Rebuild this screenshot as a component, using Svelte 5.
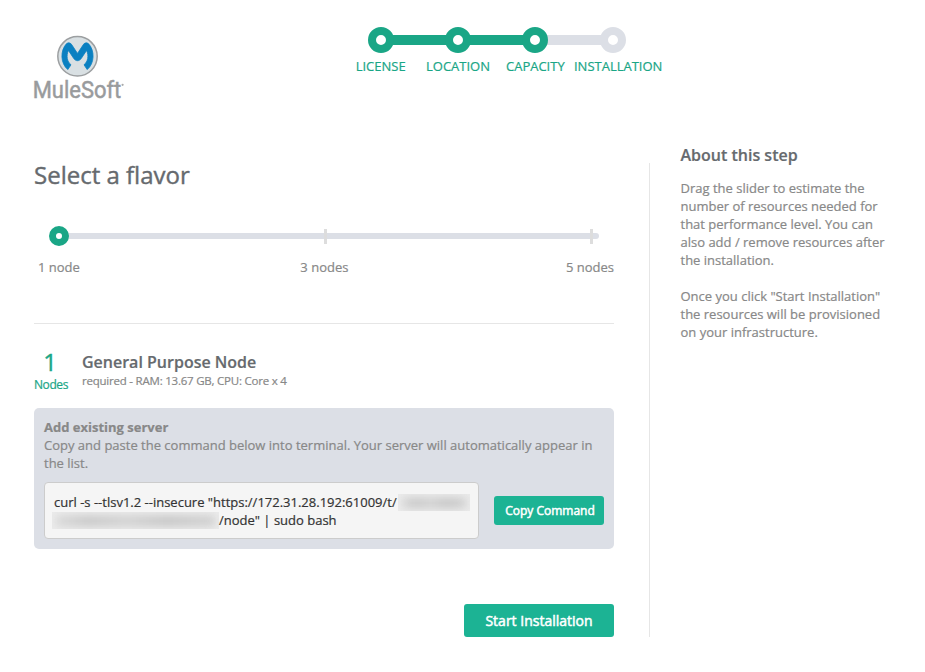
<script>
  const steps = [
    { label: 'LICENSE', done: true },
    { label: 'LOCATION', done: true },
    { label: 'CAPACITY', done: true },
    { label: 'INSTALLATION', done: false }
  ];
  const flavors = ['1 node', '3 nodes', '5 nodes'];
</script>

<div class="page">
  <header>
    <svg class="logo" width="92" height="68" viewBox="0 0 92 68" role="img" aria-label="MuleSoft">
      <circle cx="44.5" cy="21.3" r="19.7" fill="#d9e0e3" stroke="#9c9fa1" stroke-width="1.5" />
      <path d="M33.6 8.6C35.4 7.2 37.6 7.8 38.8 9.8L44.5 18.4L50.2 9.8C51.4 7.8 53.6 7.2 55.4 8.6C62 15.4 61.6 28.6 54.2 34.6L51 29.8C55 26.6 56 20.8 53.6 15.4L48.2 23.6C46.2 26.4 42.8 26.4 40.8 23.6L35.4 15.4C33 20.8 34 26.6 38 29.8L34.8 34.6C27.4 28.6 27 15.4 33.6 8.6Z" fill="#0a80c1" stroke="#0a80c1" stroke-width="0.8" />
      <text x="-0.3" y="62.6" textLength="88.6" lengthAdjust="spacingAndGlyphs">MuleSoft</text>
      <circle cx="89.6" cy="49.8" r="1.1" fill="#aaa" />
    </svg>
    <ol class="steps">
      {#each steps as step}
        <li class:done={step.done}>
          <div class="rail"><i></i><b></b><i></i></div>
          <span>{step.label}</span>
        </li>
      {/each}
    </ol>
  </header>

  <div class="body">
    <main>
      <h1>Select a flavor</h1>
      <div class="slider">
        <div class="track">
          <b class="thumb"></b>
          <i class="tick"></i>
          <i class="tick"></i>
        </div>
        <div class="labels">
          {#each flavors as f}<span>{f}</span>{/each}
        </div>
      </div>

      <section class="profile">
        <div class="count"><strong>1</strong><span>Nodes</span></div>
        <div class="info">
          <h2>General Purpose Node</h2>
          <p>required - RAM: 13.67 GB, CPU: Core x 4</p>
        </div>
      </section>

      <section class="panel">
        <strong>Add existing server</strong>
        <p>Copy and paste the command below into terminal. Your server will automatically appear in the list.</p>
        <div class="row">
          <div class="command">
            <div class="line">curl -s --tlsv1.2 --insecure "https://172.31.28.192:61009/t/<span class="mask first"><i></i></span></div>
            <div class="line"><span class="mask second"><i></i></span>/node" | sudo bash</div>
          </div>
          <button class="copy">Copy Command</button>
        </div>
      </section>

      <button class="start">Start Installation</button>
    </main>

    <aside>
      <h3>About this step</h3>
      <p>Drag the slider to estimate the number of resources needed for that performance level. You can also add / remove resources after the installation.</p>
      <p>Once you click "Start Installation" the resources will be provisioned on your infrastructure.</p>
    </aside>
  </div>
</div>

<style>
  :global(body) { background: #fff; }
  .page {
    box-sizing: border-box;
    width: 925px;
    height: 672px;
    overflow: hidden;
    padding-left: 34px;
    font: 13px/18px "Open Sans", sans-serif;
    color: #888;
    -webkit-text-stroke: 0.2px;
  }
  h1, h2, h3, p, ol { margin: 0; padding: 0; }
  header { display: flex; height: 143px; box-sizing: border-box; padding-top: 27px; }
  .logo { margin: 8px 0 0 -1px; display: block; flex: none; overflow: visible; }
  .logo text { font: 400 24px Roboto, sans-serif; fill: #999b9d; stroke: #999b9d; stroke-width: 0.5px; }
  .steps { display: flex; list-style: none; margin-left: 217px; }
  .steps li { width: 77.33px; color: #1aa686; text-align: center; }
  .rail { display: flex; align-items: center; height: 26px; }
  .rail i { flex: 1; height: 10px; background: #dcdfe6; margin: 0 -1px; }
  .rail b { position: relative; box-sizing: border-box; width: 26px; height: 26px; border: 8px solid #dcdfe6; border-radius: 50%; }
  .done .rail i { background: #1aa686; }
  .done:nth-child(3) .rail i:last-child { background: #dcdfe6; }
  .done .rail b { border-color: #1aa686; }
  li:first-child .rail i:first-child, li:last-child .rail i:last-child { background: transparent; }
  .steps span { display: block; margin-top: 4px; white-space: nowrap; }

  .body { display: flex; }
  main { width: 580px; padding-top: 14px; }
  h1 { font-size: 24px; line-height: 36px; font-weight: 400; color: #666a6e; -webkit-text-stroke: 0.4px; }
  .slider { margin-top: 40px; height: 90px; border-bottom: 1px solid #e6e6e6; }
  .track {
    display: flex;
    align-items: center;
    justify-content: space-between;
    height: 6px;
    width: 540px;
    box-sizing: border-box;
    margin-left: 25px;
    padding-right: 6px;
    border-radius: 3px;
    background: #dcdfe6;
  }
  .thumb { box-sizing: border-box; width: 20px; height: 20px; margin-left: -10px; border: 7px solid #1aa686; border-radius: 50%; background: #fff; }
  .tick { width: 3px; height: 15px; background: #ddd; margin-top: 1px; }
  .tick:nth-child(2) { margin-left: -9px; }
  .labels { display: flex; justify-content: space-between; margin-top: 19px; padding-left: 4px; }
  .labels span:nth-child(2) { margin-left: 3px; }

  .profile { display: flex; height: 84px; box-sizing: border-box; padding-top: 26px; }
  .count { width: 34px; margin-right: 14px; display: flex; flex-direction: column; align-items: center; color: #1aa686; }
  .count strong { font-size: 24px; line-height: 24px; padding-bottom: 2px; font-weight: 400; margin-right: 2px; -webkit-text-stroke: 0.4px; }
  .count span { font-size: 12px; line-height: 18px; letter-spacing: -0.4px; }
  h2, h3 { font-size: 16px; font-weight: 600; color: #666a6e; }
  h2 { line-height: 24px; }
  .info p { font-size: 11.5px; line-height: 14px; letter-spacing: -0.22px; }

  .panel { box-sizing: border-box; height: 141px; padding: 10px; border-radius: 5px; background: #dcdfe6; }
  .panel strong { display: block; font-weight: 700; }
  .row { display: flex; align-items: center; justify-content: space-between; margin-top: 10px; }
  .command { box-sizing: border-box; width: 435px; height: 57px; padding: 10px 9px; border: 1px solid #ccc; border-radius: 4px; background: #f5f5f5; color: #333; }
  .line { display: flex; align-items: center; white-space: nowrap; }
  .mask { overflow: hidden; height: 17px; background: #ebebeb; flex: none; }
  .mask i { display: block; height: 10px; margin: 4px 4px; background: linear-gradient(90deg, #d8d8d8, #c6c6c6 20%, #d0d0d0 45%, #c4c4c4 70%, #cfcfcf); filter: blur(4px); }
  .first { width: 72px; margin-left: 1px; }
  .second { width: 167px; margin-left: -2px; }
  button { box-sizing: border-box; border: 0; border-radius: 3px; padding: 0; background: #1cb394; color: #fff; font-family: "Open Sans", sans-serif; font-weight: 400; -webkit-text-stroke: 0.5px; }
  .copy { width: 110px; height: 29px; font-size: 12px; padding-left: 2px; }
  .start { display: block; width: 150px; height: 33px; margin: 55px 0 0 auto; font-size: 14px; }

  aside { margin-left: 35px; width: 245px; height: 494px; box-sizing: border-box; padding-left: 31.5px; background: linear-gradient(#e6e6e6, #e6e6e6) 0 20px / 1px 474px no-repeat; }
  h3 { line-height: 24px; }
  aside p { margin-top: 12px; width: 209px; }
  aside p + p { margin-top: 18px; }
</style>
